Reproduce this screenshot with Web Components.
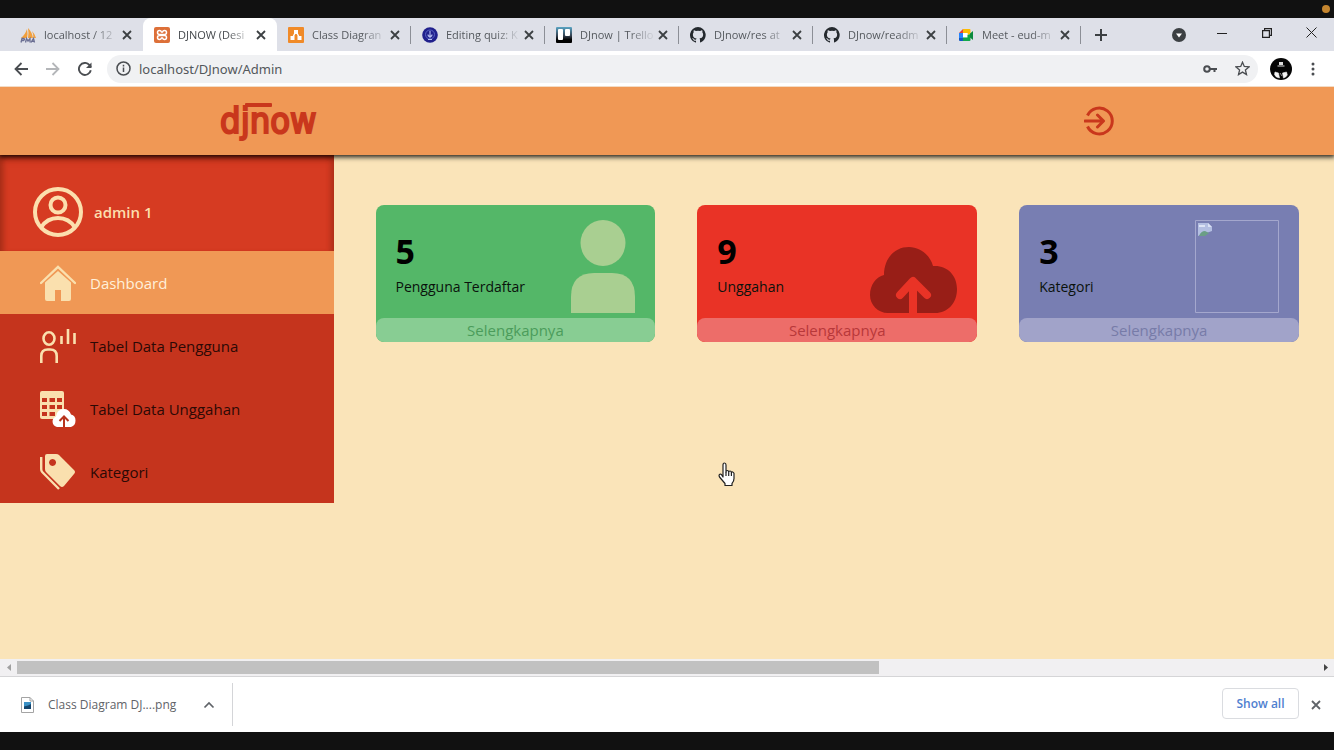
<!DOCTYPE html>
<html lang="id">
<head>
<meta charset="utf-8">
<title>DJNOW Admin</title>
<style>
  html, body { margin: 0; min-height: 100%; }
  body { background: #111; font-family: "Open Sans", "Noto Sans", sans-serif; font-size: 15px; color: #202124; }
</style>
</head>
<body>
<screen-frame>
  <tab-strip>
    <browser-tab icon="pma" label="localhost / 12"></browser-tab>
    <browser-tab icon="xampp" label="DJNOW (Desi" active></browser-tab>
    <browser-tab icon="diagram" label="Class Diagran"></browser-tab>
    <browser-tab icon="quiz" label="Editing quiz: K"></browser-tab>
    <browser-tab icon="trello" label="DJnow | Trello"></browser-tab>
    <browser-tab icon="github" label="DJnow/res at"></browser-tab>
    <browser-tab icon="github" label="DJnow/readm"></browser-tab>
    <browser-tab icon="meet" label="Meet - eud-m"></browser-tab>
  </tab-strip>
  <tool-bar></tool-bar>
  <admin-page></admin-page>
  <scroll-track></scroll-track>
  <download-shelf></download-shelf>
</screen-frame>

<script>
const RESET = `
  :host, *, *::before, *::after { box-sizing: border-box; }
  button { appearance: none; border: 0; padding: 0; margin: 0; background: none; font: inherit; color: inherit; cursor: pointer; display: flex; align-items: center; justify-content: center; }
  a { color: inherit; text-decoration: none; }
  svg { display: block; flex: none; }
`;
function element(name, css, html) {
  customElements.define(name, class extends HTMLElement {
    constructor() {
      super();
      this.attachShadow({ mode: "open" });
    }
    connectedCallback() {
      const markup = typeof html === "function" ? html(this) : html;
      this.shadowRoot.innerHTML = `<style>${RESET}${css}</style>${markup}`;
    }
  });
}

const CROSS = `<svg width="10" height="10" viewBox="0 0 10 10" fill="none" stroke="currentColor" stroke-width="1.8"><path d="M1 1l8 8M9 1l-8 8"/></svg>`;

const FAVICONS = {
  pma: `<path d="M1 11Q5 8 7 2q1 5 0 9zM8 11Q9 6 8 1q4 4 5 10zM13.500 11Q13.500 7 12 4q3 3 4 7z" fill="#f2a03d"/><path d="M1 15.500l1-4h2q1 1-.5 2H2M5.500 15.500l1-4L8 14l2-2.500v4M11 15.500l2.500-4 1 4M12 14.300h2" fill="none" stroke="#6b6f93" stroke-width="1.300"/>`,
  xampp: `<rect width="16" height="16" rx="2" fill="#dd7039"/><path d="M5.500 3.500a2 2 0 1 0 0 4h5a2 2 0 1 0 0-4q-1.500 0-2 1.500h-1q-.5-1.500-2-1.500zM5.500 8.500a2 2 0 1 0 0 4q1.500 0 2-1.500h1q.5 1.500 2 1.500a2 2 0 1 0 0-4z" fill="none" stroke="#fff" stroke-width="1.500"/>`,
  diagram: `<rect width="16" height="16" rx="1" fill="#f08a28"/><path d="M8 4L4.500 11M8 4l3.500 7" stroke="#fff" stroke-width="1.500"/><rect x="6" y="3" width="4" height="4" fill="#fff"/><rect x="2.500" y="9" width="4" height="4" fill="#fff"/><rect x="9.500" y="9" width="4" height="4" fill="#fff"/>`,
  quiz: `<circle cx="8" cy="8" r="7.800" fill="#20208c"/><circle cx="8" cy="7.500" r="4.500" fill="none" stroke="#5a63c4"/><path d="M8 4v7M6 7.500q0 2 2 2t2-2M6 12.500h4" fill="none" stroke="#b5bdf0" stroke-width="1.100"/>`,
  trello: `<defs><linearGradient id="t" x2="0" y2="1"><stop stop-color="#5aa5c4"/><stop offset=".55" stop-color="#34404f"/><stop offset=".8" stop-color="#000"/></linearGradient></defs><rect width="16" height="16" rx="1" fill="url(#t)"/><rect x="2" y="2" width="5" height="11" rx="1" fill="#fff"/><rect x="9" y="2" width="5" height="7" rx="1" fill="#fff"/>`,
  github: `<path fill="#24292e" d="M8 0a8 8 0 0 0-2.530 15.590c.4.070.55-.17.55-.38v-1.490c-2.230.48-2.700-1.070-2.700-1.070-.36-.92-.89-1.170-.89-1.170-.73-.5.060-.49.060-.49.800.060 1.230.83 1.230.83.710 1.220 1.870.87 2.330.66.070-.52.280-.87.500-1.070-1.770-.2-3.640-.89-3.640-3.950 0-.87.310-1.590.820-2.150-.08-.2-.36-1.020.080-2.120 0 0 .67-.21 2.200.82a7.600 7.600 0 0 1 4 0c1.530-1.040 2.200-.82 2.200-.82.440 1.100.160 1.920.080 2.120.51.560.820 1.270.820 2.150 0 3.070-1.870 3.750-3.650 3.950.29.250.54.730.54 1.480v2.200c0 .21.150.46.550.38A8 8 0 0 0 8 0z"/>`,
  meet: `<path d="M1 6l4-4v4z" fill="#e94335"/><path d="M5 2h6.500q1 0 1 1v4L9.500 8V6H5z" fill="#fbbc04"/><path d="M1 6h4v5H1z" fill="#2684fc"/><path d="M1 11h4v3H2q-1 0-1-1z" fill="#1558c0"/><path d="M5 6h4.500v4.500H5z" fill="#fff"/><path d="M5 10.500h4.500V8l3-1v6q0 1-1 1H5z" fill="#12a84b"/><path d="M12 6.500l3-2.500v9l-3-2.500z" fill="#0b8a3c"/>`
};

element("screen-frame", `
  :host { display: flex; flex-direction: column; min-height: 100vh; background: #fff; }
  .edge { flex: none; height: 18px; background: #111; display: flex; align-items: center; justify-content: flex-end; padding-right: 4px; }
  .edge i { width: 8px; height: 8px; border-radius: 50%; background: #c4852f; }
  ::slotted(admin-page) { flex: 1; }
`, `<div class="edge"><i></i></div><slot></slot><div class="edge"></div>`);

element("tab-strip", `
  :host { display: flex; height: 33px; background: #dee0e8; padding-left: 9px; color: #3c4043; }
  .tabs { display: flex; flex: 0 1 1072px; min-width: 0; }
  ::slotted(browser-tab) { flex: 1 1 0; min-width: 0; }
  .new { width: 40px; }
  .space { flex: 1; }
  .controls { display: flex; height: 29px; }
  .controls button { width: 45px; }
  .controls .search { width: 41px; height: 33px; }
`, `
  <div class="tabs"><slot></slot></div>
  <button class="new" aria-label="New tab"><svg width="12" height="12" viewBox="0 0 12 12" stroke="currentColor" stroke-width="2"><path d="M6 0v12M0 6h12"/></svg></button>
  <span class="space"></span>
  <div class="controls">
    <button class="search" aria-label="Search tabs"><svg width="14" height="14" viewBox="0 0 14 14"><circle cx="7" cy="7" r="7" fill="#3c4043"/><path d="M4 5.500h6L7 9.500z" fill="#fff"/></svg></button>
    <button aria-label="Minimize"><svg width="10" height="10" viewBox="0 0 10 10" stroke="#222"><path d="M0 5.500h10"/></svg></button>
    <button aria-label="Restore"><svg width="10" height="10" viewBox="0 0 10 10" fill="none" stroke="#222" stroke-width="1.200"><path d="M.6 2.600h6.800v6.800H.6zM2.600 2.500V.6h6.800v6.800H7.500"/></svg></button>
    <button aria-label="Close window"><svg width="11" height="11" viewBox="0 0 11 11" stroke="#222"><path d="M.5.5l10 10M10.500.5l-10 10"/></svg></button>
  </div>`);

element("browser-tab", `
  :host { display: flex; align-items: center; padding: 0 8px 0 11px; font-size: 11px; color: #55595e; background: linear-gradient(#8c8f96, #8c8f96) no-repeat right center / 1px 18px; }
  :host([active]) { background: #fff; border-radius: 8px 8px 0 0; color: #45494d; }
  :host([icon="pma"]) { background: none; }
  .title { flex: 1; min-width: 0; margin-left: 8px; white-space: nowrap; justify-content: flex-start; line-height: 20px; mask-image: linear-gradient(90deg, #000 65%, rgba(0, 0, 0, .15) 95%); }
  .close { width: 16px; height: 16px; color: #3c4043; }
`, host => `
  <svg width="16" height="16" viewBox="0 0 16 16" aria-hidden="true">${FAVICONS[host.getAttribute("icon")]}</svg>
  <button class="title">${host.getAttribute("label")}</button>
  <button class="close" aria-label="Close tab">${CROSS}</button>`);

element("tool-bar", `
  :host { display: flex; align-items: center; height: 36px; padding: 0 5px; background: #fff; color: #4a4d51; border-bottom: 1px solid #f3dcc6; position: relative; z-index: 2; }
  button { width: 32px; height: 32px; }
  .field { flex: 1; display: flex; align-items: center; height: 28px; margin: 0 7px 0 6px; padding: 0 0 0 9px; border-radius: 14px; background: #f0f1f3; }
  input { flex: 1; min-width: 0; border: 0; outline: 0; padding: 0; margin-left: 8px; background: none; font: 13px/20px "Noto Sans", "Open Sans", sans-serif; color: #53575b; }
`, `
  <button aria-label="Back"><svg width="14" height="14" viewBox="0 0 14 14" fill="none" stroke="currentColor" stroke-width="1.800"><path d="M14 7H1.500M7.500 1l-6 6 6 6"/></svg></button>
  <button aria-label="Forward" style="color:#b4b6b9"><svg width="14" height="14" viewBox="0 0 14 14" fill="none" stroke="currentColor" stroke-width="1.800"><path d="M0 7h12.500M6.500 1l6 6-6 6"/></svg></button>
  <button aria-label="Reload"><svg width="14" height="14" viewBox="0 0 14 14" fill="none" stroke="currentColor" stroke-width="1.900"><path d="M12.800 8.200A6 6 0 1 1 11.300 2.800L13 5"/><path d="M13.500.5v5.500H8z" fill="currentColor" stroke="none"/></svg></button>
  <div class="field">
    <svg width="15" height="15" viewBox="0 0 15 15" fill="none" stroke="currentColor" stroke-width="1.500"><circle cx="7.500" cy="7.500" r="6.500"/><path d="M7.500 6.500V11M7.500 3.800v1.600"/></svg>
    <input aria-label="Address" value="localhost/DJnow/Admin">
    <button aria-label="Saved password"><svg width="14" height="10" viewBox="0 0 14 10" fill="none" stroke="currentColor" stroke-width="2"><circle cx="4" cy="5" r="2.800"/><path d="M7 5h7M11.500 5v3"/></svg></button>
    <button aria-label="Bookmark"><svg width="15" height="15" viewBox="0 0 15 15" fill="none" stroke="currentColor" stroke-width="1.300"><path d="M7.500 1.200l1.800 4.300 4.700.4-3.600 3.100 1.100 4.600-4-2.500-4 2.500 1.100-4.600L1 5.900l4.700-.4z"/></svg></button>
  </div>
  <button aria-label="Profile"><svg width="22" height="22" viewBox="0 0 22 22"><circle cx="11" cy="11" r="11" fill="#050505"/><path d="M9 4h4v3H9zM7.500 7.500h7v1h-7z" fill="#ddd"/><path d="M5 14l3.500 1 1 5q-4-.5-5-3.500zM12.500 15l4-1 .8 3q-1.300 2.500-3.800 3zM10 15l2 3" fill="#f5f5f5" stroke="#eee" stroke-width=".6"/></svg></button>
  <button aria-label="Menu"><svg width="4" height="14" viewBox="0 0 4 14" fill="currentColor"><circle cx="2" cy="2" r="1.500"/><circle cx="2" cy="7" r="1.500"/><circle cx="2" cy="12" r="1.500"/></svg></button>`);

element("admin-page", `
  :host { display: flex; flex-direction: column; background: #fae4b9; position: relative; }
  .body { display: grid; grid-template-columns: 1fr 3fr; align-items: start; flex: 1; }
  main { display: grid; grid-template-columns: repeat(3, minmax(0, 1fr)); gap: 42px; padding: 50px 35px 40px 42px; }
  /* the pointer floats freely over the page */
  .pointer { position: absolute; left: 718px; top: 375px; }
`, `
  <site-header></site-header>
  <div class="body">
    <side-nav></side-nav>
    <main>
      <stat-card count="5" label="Pengguna Terdaftar" style="--card:#54b768;--strip:#88cd93;--link:#4b9c5b">
        <svg width="64" height="93" viewBox="0 0 64 93" fill="#a9cf91"><ellipse cx="32" cy="23" rx="22.500" ry="23"/><path d="M0 93V77Q0 53 23 53h18q23 0 23 24v16z"/></svg>
      </stat-card>
      <stat-card count="9" label="Unggahan" style="--card:#e93326;--strip:#ed6d69;--link:#b8383a">
        <svg width="87" height="66" viewBox="0 0 87 66"><path fill="#981e17" d="M18 66C8 66 0 58 0 48c0-10 6-18 14-20C14 12 24 0 39 0c11 0 21 8 24 19 14-1 24 9 24 23 0 14-9 24-22 24z"/><path d="M43 66V36M30 48l13-14 14 14" fill="none" stroke="#e93326" stroke-width="8" stroke-linecap="round" stroke-linejoin="round"/></svg>
      </stat-card>
      <stat-card count="3" label="Kategori" style="--card:#787eb2;--strip:#a1a3c9;--link:#777ba8">
        <svg width="84" height="93" viewBox="0 0 84 93"><path d="M.5.5h83v92H.5z" fill="none" stroke="#a4a7cd"/><path d="M3 3h10l4 4v4L3 16z" fill="#b4bfe2"/><path d="M13 3v4h4" fill="#dbe2f5"/><path d="M4 6h6" stroke="#dde4f5" stroke-width="2"/><path d="M4 16q2-5 6-5l4 2-4 3z" fill="#6b9e86"/></svg>
      </stat-card>
    </main>
  </div>
  <svg class="pointer" width="17" height="25" viewBox="0 0 17 25" fill="#fff" stroke="#222" stroke-width="1.200" stroke-linejoin="round"><path d="M5 15V3q0-2 1.500-2T8 3v7q0-1.500 1.300-1.500t1.400 1.800q.1-1.300 1.300-1.300t1.400 1.800q.3-1 1.300-.8t1.300 1.500v5q0 3-2 5v2H7v-2L1.500 15q-1-2 .3-2.700T4 13.500z"/><path d="M8 10v4M10.700 10.500V14M13.400 11v3" fill="none"/></svg>`);

element("site-header", `
  :host { display: flex; align-items: center; justify-content: space-between; height: 68px; padding: 0 16.5%; background: #f09855; color: #c9371c; box-shadow: 0 1px 5px 1px rgba(0, 0, 0, .9); position: relative; z-index: 1; }
  .logo { position: relative; font: 36px/60px "DejaVu Sans Condensed", "DejaVu Sans", sans-serif; -webkit-text-stroke: 2px currentColor; }
  .logo::after { content: ""; position: absolute; left: 25px; top: 12px; width: 27px; height: 4px; border-radius: 1px; background: currentColor; }
`, `
  <a class="logo" href="#">djnow</a>
  <a href="#" aria-label="Keluar"><svg width="30" height="30" viewBox="0 0 30 30" fill="none" stroke="currentColor" stroke-width="3" stroke-linecap="round" stroke-linejoin="round"><path d="M3.500 9.500a13 13 0 1 1 0 11" stroke-linecap="butt"/><path d="M1 15h18M13.500 9l6 6-6 6"/></svg></a>`);

element("side-nav", `
  :host { display: block; background: #c5341d; }
  .user { display: flex; align-items: center; gap: 11px; height: 96px; padding: 18px 33px 0; background: #d63b22; box-shadow: inset 8px 0 5px -4px rgba(130, 40, 20, .4), inset -8px 0 5px -4px rgba(130, 40, 20, .3), inset 0 5px 6px rgba(150, 30, 10, .5); color: #fcdfae; font-weight: 600; }
`, `
  <div class="user">
    <svg width="50" height="50" viewBox="0 0 50 50" fill="none" stroke="currentColor" stroke-width="4"><circle cx="25" cy="25" r="23"/><circle cx="25" cy="18" r="7.500"/><path d="M8 40.500Q14 31 25 31t17 9.500"/></svg>
    <span>admin 1</span>
  </div>
  <nav>
    <nav-item active label="Dashboard"><svg width="36" height="36" viewBox="0 0 36 36" fill="#fae0ae"><path d="M5 17.500L18 6l13 11.500V34q0 2-2 2h-8V25h-6v11H7q-2 0-2-2z"/><path d="M1 18L18 2l17 16" fill="none" stroke="#fae0ae" stroke-width="2.400" stroke-linecap="round"/></svg></nav-item>
    <nav-item label="Tabel Data Pengguna"><svg width="36" height="36" viewBox="0 0 36 36" fill="none" stroke="#fae0ae" stroke-width="2.600"><ellipse cx="9" cy="10.500" rx="5.500" ry="6.200"/><path d="M1.300 35V28q0-6.500 6.500-6.500h2.400q6.500 0 6.500 6.500v7M21.500 8v8M28 1v15M34.500 5v11"/></svg></nav-item>
    <nav-item label="Tabel Data Unggahan"><svg width="36" height="36" viewBox="0 0 36 36"><rect width="24" height="28" rx="2" fill="#fae0ae"/><path d="M2 7h5v4H2zM9.500 7H15v4H9.500zM17 7h5v4h-5zM2 14h5v4H2zM9.500 14H15v4H9.500zM17 14h5v4h-5zM2 21h5v4H2zM9.500 21H15v4H9.500z" fill="#c5341d"/><path d="M17 36a5.500 5.500 0 0 1-1-10.500Q17 18 24 18q5 0 7 5.500 4.500 1 4.500 6t-4.500 6.500z" fill="#fff"/><path d="M24 36v-9M19.500 30l4.500-4.500 4.500 4.500" fill="none" stroke="#b8331c" stroke-width="2"/></svg></nav-item>
    <nav-item label="Kategori"><svg width="36" height="36" viewBox="0 0 36 36" fill="#fae0ae"><path fill-rule="evenodd" d="M5 2q0-2 2-2h9q2 0 3 1l15 15q2 2 0 4L24 32q-2 2-4 0L6 18q-1-1-1-3zM12.500 5a3.500 3.500 0 1 0 .1 0z"/><path d="M1.200 3v12q0 2 1 3L19 35" fill="none" stroke="#fae0ae" stroke-width="2.400"/></svg></nav-item>
  </nav>`);

element("nav-item", `
  :host { display: block; color: #2c0905; }
  :host([active]) { background: #f09855; color: #fff0da; }
  a { display: flex; align-items: center; gap: 14px; height: 63px; padding: 0 40px; line-height: 20px; }
`, host => `<a href="#"><slot></slot><span>${host.getAttribute("label")}</span></a>`);

element("stat-card", `
  :host { display: flex; flex-direction: column; border-radius: 8px; background: var(--card); overflow: hidden; }
  .info { display: flex; justify-content: space-between; align-items: flex-end; height: 113px; padding: 0 20px 5px; color: #0a120c; }
  .text { padding-bottom: 14px; }
  strong { display: block; font-size: 34px; line-height: 48px; color: #000; }
  span { display: block; font-size: 14px; line-height: 24px; white-space: nowrap; }
  .more { display: block; height: 24px; line-height: 24px; text-align: center; border-radius: 8px; background: var(--strip); color: var(--link); }
`, host => `
  <div class="info">
    <div class="text"><strong>${host.getAttribute("count")}</strong><span>${host.getAttribute("label")}</span></div>
    <slot></slot>
  </div>
  <a class="more" href="#">Selengkapnya</a>`);

element("scroll-track", `
  :host { display: flex; height: 18px; background: #f1f0f2; border-bottom: 1px solid #d5d5d7; padding: 2px 0; }
  button { width: 17px; }
  .track { flex: 1; }
  .thumb { width: 66.3%; height: 13px; background: #c1c1c1; }
`, `
  <button aria-label="Scroll left"><svg width="4" height="7" viewBox="0 0 4 7"><path d="M4 0v7L0 3.500z" fill="#a0a0a0"/></svg></button>
  <div class="track"><div class="thumb"></div></div>
  <button aria-label="Scroll right"><svg width="4" height="7" viewBox="0 0 4 7"><path d="M0 0v7l4-3.500z" fill="#444"/></svg></button>`);

element("download-shelf", `
  :host { display: flex; align-items: center; height: 55px; background: #fff; padding: 0 13px 0 21px; color: #5f6368; font-size: 12px; }
  .item { display: flex; align-items: center; height: 43px; padding-right: 17px; border-right: 1px solid #d4d5d8; }
  .file { gap: 14px; margin-right: 27px; }
  .space { flex: 1; }
  .all { width: 77px; height: 31px; margin: 0 12px 2px 0; border: 1px solid #dadce0; border-radius: 4px; color: #4f80cf; font-weight: 600; }
`, `
  <div class="item">
    <button class="file"><svg width="13" height="16" viewBox="0 0 13 16"><path d="M.5.5h8.500l3.500 3.500v11.500H.5z" fill="#fff" stroke="#a4a4a4"/><path d="M9 .5V4h3.500" fill="none" stroke="#a4a4a4"/><path d="M3 5h7v7H3z" fill="#3990c5"/><path d="M3 9.500l4-1 3-1.500v5H3z" fill="#15456d"/></svg><span>Class Diagram DJ....png</span></button>
    <button class="more" aria-label="Options"><svg width="12" height="8" viewBox="0 0 12 8" fill="none" stroke="#5f6368" stroke-width="1.700"><path d="M1.500 6.500L6 2l4.500 4.500"/></svg></button>
  </div>
  <span class="space"></span>
  <button class="all">Show all</button>
  <button aria-label="Close downloads">${CROSS}</button>`);
</script>
</body>
</html>
